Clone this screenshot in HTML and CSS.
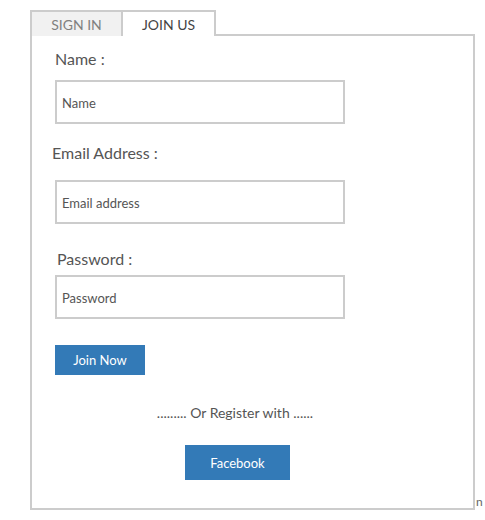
FILE: index.html
```html
<!DOCTYPE html>
<html>
<head>
<meta charset="utf-8">
<link rel="stylesheet" href="styles.css">
</head>
<body>
<div class="page">
  <div class="tabs">
    <div class="tab">SIGN IN</div>
    <div class="tab active">JOIN US</div>
  </div>
  <div class="panel">
    <label class="label l-name">Name :</label>
    <input class="field f-name" type="text" placeholder="Name">
    <label class="label l-email">Email Address :</label>
    <input class="field f-email" type="text" placeholder="Email address">
    <label class="label l-pass">Password :</label>
    <input class="field f-pass" type="password" placeholder="Password">
    <button class="btn join">Join Now</button>
    <p class="or">......... Or Register with ......</p>
    <div class="center">
      <button class="btn fb">Facebook</button>
    </div>
  </div>
  <span class="mark-n">n</span>
  <span class="mark">creazy<em>/</em></span>
</div>
</body>
</html>
```
FILE: styles.css
```css
html, body {
  margin: 0;
  padding: 0;
  background: #fff;
  font-family: Lato, "Open Sans", sans-serif;
}
.page {
  position: relative;
  padding: 10px 0 0 30px;
  width: 445px;
}
.tabs {
  display: flex;
  position: relative;
  z-index: 2;
}
.tab {
  height: 24px;
  line-height: 26px;
  border: 2px solid #ccc;
  border-bottom: none;
  background: #f1f1f1;
  color: #808080;
  font-size: 14px;
  text-align: center;
  box-sizing: content-box;
  width: 89px;
}
.tab.active {
  border-left: none;
  background: #fff;
  color: #444;
  width: 91px;
}
.panel {
  position: relative;
  z-index: 1;
  background: #fff;
  margin-top: -2px;
  border: 2px solid #ccc;
  height: 476px;
  padding: 13px 0 0 23px;
  box-sizing: border-box;
  display: flex;
  flex-direction: column;
  align-items: flex-start;
}
.label {
  display: block;
  font-size: 16px;
  line-height: 20px;
  color: #555;
}
.l-name { margin-bottom: 11px; }
.l-email { margin: 19px 0 17px -3px; }
.l-pass { margin: 25px 0 6px 2px; }
.field {
  width: 290px;
  height: 44px;
  box-sizing: border-box;
  border: 2px solid #ccc;
  padding: 1px 5px 0;
  margin: 0;
  font-family: Lato, sans-serif;
  font-size: 13px;
  color: #555;
  outline: none;
}
.field::placeholder {
  color: #555;
  opacity: 1;
}
.btn {
  border: none;
  background: #337ab7;
  color: #fff;
  font-family: Lato, sans-serif;
  font-size: 13px;
  margin: 0;
  padding: 0;
}
.join {
  width: 90px;
  height: 30px;
  margin-top: 26px;
}
.or {
  margin: 29px 0 0 0;
  width: 360px;
  text-align: center;
  font-size: 14px;
  line-height: 17px;
  color: #555;
}
.center {
  width: 365px;
  display: flex;
  justify-content: center;
  margin-top: 24px;
}
.fb {
  width: 105px;
  height: 35px;
  padding-top: 1px;
}
.mark-n {
  position: absolute;
  left: 476px;
  top: 494px;
  font-size: 12px;
  color: #666;
}
.mark {
  position: absolute;
  left: 390px;
  top: 499px;
  font-size: 20px;
  font-weight: bold;
  color: #c6dcf3;
}
.mark em {
  color: #f7b66a;
  font-style: normal;
  margin-left: 4px;
}
```
